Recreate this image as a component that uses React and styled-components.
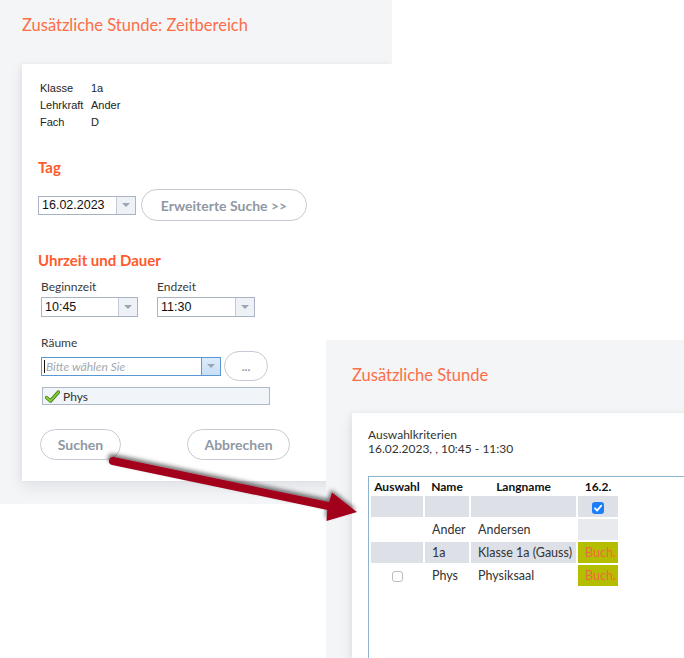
import React from "react";
import styled, { createGlobalStyle } from "styled-components";

const GlobalStyle = createGlobalStyle`
  html, body { margin: 0; padding: 0; background: #ffffff; }
  * { box-sizing: border-box; }
`;

const ORANGE_TITLE = "#fd6d48";
const ORANGE_HEAD = "#ff5a2d";
const SANS = `"Lato", "Open Sans", sans-serif`;
const ARIAL = `"Liberation Sans", Arial, sans-serif`;

const Canvas = styled.div`
  position: relative;
  width: 684px;
  height: 658px;
  overflow: hidden;
  background: #ffffff;
  font-family: ${SANS};
`;

const Window = styled.section`
  width: ${(p) => p.$w}px;
  height: ${(p) => p.$h}px;
  background: #f4f5f7;
  display: flex;
  flex-direction: column;
  overflow: hidden;
`;

const OverlayWindow = styled(Window)`
  position: absolute;
  left: 326px;
  top: 340px;
`;

const PageTitle = styled.h1`
  margin: 0;
  padding: ${(p) => p.$top}px 0 0 ${(p) => p.$left}px;
  height: ${(p) => p.$height}px;
  font-family: ${SANS};
  font-weight: 400;
  font-size: 16.5px;
  line-height: 20px;
  color: ${ORANGE_TITLE};
  flex-shrink: 0;
`;

const Panel = styled.div`
  margin-left: ${(p) => p.$left}px;
  width: ${(p) => p.$w}px;
  height: ${(p) => (p.$h ? `${p.$h}px` : "auto")};
  flex: ${(p) => (p.$h ? "0 0 auto" : "1 0 auto")};
  background: #ffffff;
  box-shadow: 0 6px 14px rgba(20, 30, 50, 0.09), -2px 0 4px rgba(20, 30, 50, 0.04);
  padding: ${(p) => p.$pt}px 0 0 16px;
  display: flex;
  flex-direction: column;
  align-items: flex-start;
`;

const InfoGrid = styled.div`
  display: grid;
  grid-template-columns: 51px auto;
  margin-left: 2px;
  font-family: ${ARIAL};
  font-size: 11px;
  line-height: 17px;
  color: #222;
`;

const SectionTitle = styled.h2`
  margin: ${(p) => p.$mt}px 0 0 0;
  font-family: ${SANS};
  font-weight: 700;
  font-size: 15px;
  line-height: 18px;
  color: ${ORANGE_HEAD};
`;

const Row = styled.div`
  display: flex;
  align-items: ${(p) => p.$align || "center"};
  gap: ${(p) => p.$gap || 0}px;
  margin-top: ${(p) => p.$mt || 0}px;
  margin-left: ${(p) => p.$ml || 0}px;
`;

const Field = styled.div`
  display: flex;
  flex-direction: column;
  gap: 3px;
`;

const Label = styled.div`
  font-family: ${SANS};
  font-size: 12px;
  line-height: 15px;
  color: #3a3a3a;
  margin-top: ${(p) => p.$mt || 0}px;
  margin-left: ${(p) => p.$ml || 0}px;
`;

const Select = styled.div`
  display: flex;
  width: ${(p) => p.$w}px;
  height: ${(p) => p.$h}px;
  border: 1px solid ${(p) => (p.$focus ? "#5b97d2" : "#a9b3c4")};
  background: #fff;
`;

const SelectValue = styled.div`
  flex: 1;
  padding-left: 3px;
  display: flex;
  align-items: center;
  font-family: ${ARIAL};
  font-size: 12.5px;
  color: #111;
  overflow: hidden;
  white-space: nowrap;
`;

const Placeholder = styled.div`
  flex: 1;
  padding-left: 2px;
  display: flex;
  align-items: center;
  font-family: ${SANS};
  font-style: italic;
  font-size: 12px;
  color: #a4a9b0;
  white-space: nowrap;
`;

const Caret = styled.span`
  display: inline-block;
  width: 1px;
  height: 13px;
  background: #111;
  margin-right: 1px;
`;

const SelectButton = styled.div`
  width: 19px;
  flex-shrink: 0;
  border-left: 1px solid ${(p) => (p.$focus ? "#5b97d2" : "#c3cad6")};
  background: ${(p) => (p.$focus ? "linear-gradient(#dcebfa, #c8dff6)" : "#eef1f5")};
  display: flex;
  align-items: center;
  justify-content: center;
`;

const Triangle = styled.span`
  width: 0;
  height: 0;
  border-left: 4px solid transparent;
  border-right: 4px solid transparent;
  border-top: 4px solid #9aa5b6;
`;

const PillButton = styled.button`
  width: ${(p) => p.$w}px;
  height: ${(p) => p.$h}px;
  border: 1px solid #c6cbd3;
  border-radius: ${(p) => p.$h / 2}px;
  background: #ffffff;
  font-family: ${SANS};
  font-weight: 700;
  font-size: ${(p) => p.$fs || 14}px;
  color: #8f98a5;
  padding: 0;
  cursor: pointer;
`;

const Chip = styled.div`
  width: 228px;
  height: 18px;
  margin-top: 6px;
  margin-left: 4px;
  border: 1px solid #aeb8c7;
  background: #f1f5f9;
  display: flex;
  align-items: center;
  gap: 3px;
  padding-left: 2px;
  font-family: ${SANS};
  font-size: 12px;
  color: #333;
`;

const Criteria = styled.div`
  font-family: ${SANS};
  font-size: 12px;
  line-height: 14px;
  color: #333;
`;

const Frame = styled.div`
  margin-top: 20px;
  width: 340px;
  flex: 1 0 auto;
  border: 1px solid #8db4ce;
  border-bottom: none;
  border-right: none;
`;

const Table = styled.table`
  border-collapse: separate;
  border-spacing: 2px;
  table-layout: fixed;
  width: 251px;
  font-family: ${SANS};
  font-size: 12.5px;
  color: #333;
`;

const Col = styled.col`
  width: ${(p) => p.$w}px;
`;

const Th = styled.th`
  height: 15px;
  line-height: 15px;
  padding: 0;
  font-weight: 700;
  font-size: 12px;
  color: #111;
  text-align: center;
  white-space: nowrap;
`;

const CELL_BG = {
  grey: "#dde0e7",
  light: "#e9eaed",
  book: "#b5bd00",
  none: "transparent",
};

const Td = styled.td`
  height: 21px;
  line-height: 21px;
  padding: 0 0 0 ${(p) => (p.$center ? 0 : 7)}px;
  background: ${(p) => CELL_BG[p.$bg || "none"]};
  color: ${(p) => (p.$bg === "book" ? "#f06b3c" : "#333")};
  text-align: ${(p) => (p.$center ? "center" : "left")};
  vertical-align: middle;
  white-space: nowrap;
  overflow: hidden;
`;

const Box = styled.span`
  display: inline-block;
  vertical-align: middle;
  width: ${(p) => (p.$checked ? 12 : 11)}px;
  height: ${(p) => (p.$checked ? 12 : 11)}px;
  border-radius: 3px;
  border: ${(p) => (p.$checked ? "none" : "1px solid #b9bcc2")};
  background: ${(p) => (p.$checked ? "#1a7ef7" : "#fff")};
  line-height: 0;
`;

const ArrowLayer = styled.svg`
  position: absolute;
  left: 0;
  top: 0;
  pointer-events: none;
`;

function GreenCheck() {
  return (
    <svg width="15" height="13" viewBox="0 0 15 13">
      <path d="M1.5 7.5 L5.5 11 L13.5 2" fill="none" stroke="#3f7d14" strokeWidth="3.4" strokeLinecap="round" strokeLinejoin="round" />
      <path d="M1.5 7.5 L5.5 11 L13.5 2" fill="none" stroke="#8fd13a" strokeWidth="1.8" strokeLinecap="round" strokeLinejoin="round" />
    </svg>
  );
}

function DropSelect({ w, h, value, focus, placeholder }) {
  return (
    <Select $w={w} $h={h} $focus={focus}>
      {placeholder ? (
        <Placeholder>
          <Caret />
          {placeholder}
        </Placeholder>
      ) : (
        <SelectValue>{value}</SelectValue>
      )}
      <SelectButton $focus={focus}>
        <Triangle />
      </SelectButton>
    </Select>
  );
}

export default function App() {
  return (
    <Canvas>
      <GlobalStyle />
      <Window $w={392} $h={504}>
        <PageTitle $top={15} $left={22} $height={64}>
          Zusätzliche Stunde: Zeitbereich
        </PageTitle>
        <Panel $left={22} $w={370} $h={417} $pt={16}>
          <InfoGrid>
            <span>Klasse</span>
            <span>1a</span>
            <span>Lehrkraft</span>
            <span>Ander</span>
            <span>Fach</span>
            <span>D</span>
          </InfoGrid>

          <SectionTitle $mt={27}>Tag</SectionTitle>
          <Row $mt={13} $gap={5}>
            <DropSelect w={98} h={19} value="16.02.2023" />
            <PillButton $w={166} $h={32}>
              Erweiterte Suche &gt;&gt;
            </PillButton>
          </Row>

          <SectionTitle $mt={30}>Uhrzeit und Dauer</SectionTitle>
          <Row $mt={10} $ml={3} $gap={19} $align="flex-start">
            <Field>
              <Label>Beginnzeit</Label>
              <DropSelect w={97} h={20} value="10:45" />
            </Field>
            <Field>
              <Label>Endzeit</Label>
              <DropSelect w={98} h={20} value="11:30" />
            </Field>
          </Row>

          <Label $mt={18} $ml={3}>Räume</Label>
          <Row $mt={1} $ml={3} $gap={3}>
            <DropSelect w={180} h={19} focus placeholder="Bitte wählen Sie" />
            <PillButton $w={44} $h={30} $fs={12}>
              ...
            </PillButton>
          </Row>
          <Chip>
            <GreenCheck />
            Phys
          </Chip>

          <Row $mt={24} $ml={2} $gap={66}>
            <PillButton $w={81} $h={31}>
              Suchen
            </PillButton>
            <PillButton $w={103} $h={31}>
              Abbrechen
            </PillButton>
          </Row>
        </Panel>
      </Window>

      <OverlayWindow $w={358} $h={318}>
        <PageTitle $top={25} $left={26} $height={73}>
          Zusätzliche Stunde
        </PageTitle>
        <Panel $left={26} $w={360} $pt={15}>
          <Criteria>
            Auswahlkriterien
            <br />
            16.02.2023, , 10:45 - 11:30
          </Criteria>
          <Frame>
            <Table>
              <colgroup>
                <Col $w={52} />
                <Col $w={44} />
                <Col $w={105} />
                <Col $w={40} />
              </colgroup>
              <thead>
                <tr>
                  <Th>Auswahl</Th>
                  <Th>Name</Th>
                  <Th>Langname</Th>
                  <Th>16.2.</Th>
                </tr>
              </thead>
              <tbody>
                <tr>
                  <Td $bg="grey" />
                  <Td $bg="grey" />
                  <Td $bg="grey" />
                  <Td $bg="grey" $center>
                    <Box $checked>
                      <svg width="12" height="12" viewBox="0 0 12 12">
                        <path d="M3 6.3 L5.2 8.5 L9.2 3.6" fill="none" stroke="#fff" strokeWidth="1.8" strokeLinecap="round" strokeLinejoin="round" />
                      </svg>
                    </Box>
                  </Td>
                </tr>
                <tr>
                  <Td />
                  <Td>Ander</Td>
                  <Td>Andersen</Td>
                  <Td $bg="light" />
                </tr>
                <tr>
                  <Td $bg="grey" />
                  <Td $bg="grey">1a</Td>
                  <Td $bg="grey">Klasse 1a (Gauss)</Td>
                  <Td $bg="book">Buch.</Td>
                </tr>
                <tr>
                  <Td $center>
                    <Box />
                  </Td>
                  <Td>Phys</Td>
                  <Td>Physiksaal</Td>
                  <Td $bg="book">Buch.</Td>
                </tr>
              </tbody>
            </Table>
          </Frame>
        </Panel>
      </OverlayWindow>

      <ArrowLayer width="684" height="658" viewBox="0 0 684 658">
        <defs>
          <filter id="arrowShadow" x="-10%" y="-50%" width="120%" height="200%">
            <feDropShadow dx="-1" dy="-3" stdDeviation="2" floodColor="#000" floodOpacity="0.55" />
          </filter>
        </defs>
        <g filter="url(#arrowShadow)" fill="#a3001f" stroke="none">
          <line x1="113" y1="461" x2="333" y2="507" stroke="#a3001f" strokeWidth="8" strokeLinecap="round" />
          <polygon points="357,512 332,492.5 327.5,507 326.5,521" />
        </g>
      </ArrowLayer>
    </Canvas>
  );
}
